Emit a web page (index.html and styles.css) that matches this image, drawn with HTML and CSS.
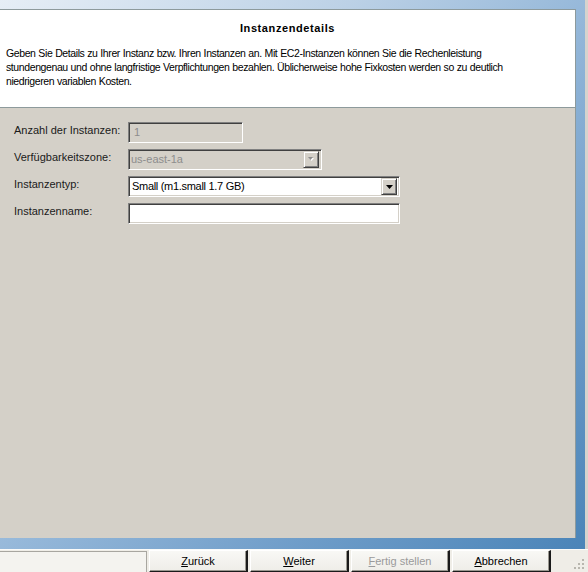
FILE: index.html
```html
<!DOCTYPE html>
<html lang="de">
<head>
<meta charset="utf-8">
<title>Instanzendetails</title>
<link rel="stylesheet" href="styles.css">
</head>
<body>
<div class="window">
  <div class="frame-row">
    <div class="frame">
      <div class="panel">
        <div class="header">
          <h1 class="title">Instanzendetails</h1>
          <p class="desc">Geben Sie Details zu Ihrer Instanz bzw. Ihren Instanzen an. Mit EC2-Instanzen können Sie die Rechenleistung<br>stundengenau und ohne langfristige Verpflichtungen bezahlen. Üblicherweise hohe Fixkosten werden so zu deutlich<br>niedrigeren variablen Kosten.</p>
        </div>
        <div class="body">
          <div class="form">
            <label class="label">Anzahl der Instanzen:</label>
            <div class="field field-disabled field-count">1</div>

            <label class="label">Verfügbarkeitszone:</label>
            <div class="field field-disabled field-zone">
              <span class="field-text">us-east-1a</span>
              <span class="drop drop-disabled">
                <svg width="7" height="5" viewBox="0 0 7 5"><polygon points="1,1 6,1 3.5,4" fill="#fff"/><polygon points="0,0 5,0 2.5,3" fill="#8d8d8d"/></svg>
              </span>
            </div>

            <label class="label">Instanzentyp:</label>
            <div class="field field-type">
              <span class="field-text">Small (m1.small 1.7 GB)</span>
              <span class="drop">
                <svg width="7" height="4" viewBox="0 0 7 4"><polygon points="0,0 7,0 3.5,4" fill="#000"/></svg>
              </span>
            </div>

            <label class="label">Instanzenname:</label>
            <div class="field field-name"></div>
          </div>
        </div>
      </div>
    </div>
    <div class="edge"></div>
  </div>
  <div class="bar">
    <div class="status"></div>
    <button class="btn"><u>Z</u>urück</button>
    <button class="btn"><u>W</u>eiter</button>
    <button class="btn btn-disabled"><u>F</u>ertig stellen</button>
    <button class="btn"><u>A</u>bbrechen</button>
    <div class="grip">
      <svg width="12" height="12" viewBox="0 0 12 12">
        <rect x="9" y="1" width="2" height="2" fill="#b8b6ae"/>
        <rect x="5" y="5" width="2" height="2" fill="#b8b6ae"/>
        <rect x="9" y="5" width="2" height="2" fill="#b8b6ae"/>
        <rect x="1" y="9" width="2" height="2" fill="#b8b6ae"/>
        <rect x="5" y="9" width="2" height="2" fill="#b8b6ae"/>
        <rect x="9" y="9" width="2" height="2" fill="#b8b6ae"/>
      </svg>
    </div>
  </div>
</div>
</body>
</html>
```

FILE: styles.css
```css
html, body {
  margin: 0;
  padding: 0;
}

body {
  width: 588px;
  height: 572px;
  overflow: hidden;
  font-family: "Liberation Sans", Arial, sans-serif;
  font-size: 11px;
  color: #111;
  background: #d4d0c8;
}

.window {
  width: 588px;
  height: 572px;
  display: flex;
  flex-direction: column;
}

.frame-row {
  display: flex;
  height: 549px;
}

.frame {
  width: 585px;
  box-sizing: border-box;
  padding: 9px 9px 11px 0;
  background: linear-gradient(to bottom right, #e6eef6 0%, #bcd1e6 30%, #97b9da 50%, #6f9dc9 75%, #4a84b8 100%);
}

.edge {
  width: 3px;
  background: #d6d3cd;
}

.panel {
  height: 100%;
  display: flex;
  flex-direction: column;
  border-top: 1px solid #8d9a9c;
  border-right: 1px solid #8d9a9c;
  box-sizing: border-box;
}

.header {
  height: 98px;
  box-sizing: border-box;
  background: #fff;
  border-bottom: 1px solid #8d9a9c;
  padding-top: 12px;
}

.title {
  margin: 0;
  font-size: 11px;
  line-height: 13px;
  font-weight: bold;
  letter-spacing: 0.6px;
  text-align: center;
  color: #000;
}

.desc {
  margin: 11px 0 0 0;
  padding-left: 6px;
  font-size: 10.5px;
  letter-spacing: -0.4px;
  word-spacing: 0.3px;
  line-height: 14px;
  white-space: nowrap;
  color: #000;
}

.body {
  flex: 1;
  background: #d4d0c8;
  padding: 14px 0 0 14px;
}

.form {
  display: grid;
  grid-template-columns: 114px auto;
  grid-auto-rows: 21px;
  row-gap: 6px;
  justify-items: start;
}

.label {
  padding-top: 2px;
  line-height: 13px;
  color: #1a1a1a;
}

.field {
  box-sizing: border-box;
  height: 21px;
  display: flex;
  align-items: center;
  padding-left: 3px;
  background: #fff;
  border-style: solid;
  border-width: 1px;
  border-color: #808080 #fff #fff #808080;
  box-shadow: inset 1px 1px 0 #404040, inset -1px -1px 0 #d4d0c8;
  color: #000;
  line-height: 13px;
}

.field-disabled {
  background: #d4d0c8;
  color: #8d8d8d;
}

.field-count {
  width: 115px;
  padding-left: 5px;
}

.field-zone {
  width: 194px;
  padding-left: 2px;
}

.field-type {
  width: 272px;
  letter-spacing: -0.3px;
}

.field-name {
  width: 272px;
}

.field-text {
  flex: 1;
}

.drop {
  width: 16px;
  height: 17px;
  box-sizing: border-box;
  margin-right: 2px;
  display: flex;
  align-items: center;
  justify-content: center;
  background: #d4d0c8;
  border-style: solid;
  border-width: 1px;
  border-color: #d4d0c8 #404040 #404040 #d4d0c8;
  box-shadow: inset 1px 1px 0 #fff, inset -1px -1px 0 #808080;
}

.drop svg {
  display: block;
}

.bar {
  height: 23px;
  display: flex;
  align-items: flex-end;
  background: #efede7;
  border-top: 1px solid #fbfbf9;
  box-sizing: border-box;
}

.status {
  width: 147px;
  height: 21px;
  box-sizing: border-box;
  background: #f4f3ef;
  border-top: 1px solid #a8a6a0;
  border-right: 1px solid #a8a6a0;
}

.btn {
  width: 99px;
  height: 22px;
  margin-left: 2px;
  padding: 0 0 1px 0;
  box-sizing: border-box;
  font-family: "Liberation Sans", Arial, sans-serif;
  font-size: 11px;
  color: #000;
  background: linear-gradient(#f8f8f5, #eeede8);
  border-style: solid;
  border-width: 1px 2px 1px 1px;
  border-color: #fff #1a1a1a #1a1a1a #fff;
  box-shadow: inset -1px -1px 0 #9a9890;
}

.btn-disabled {
  color: #9a9a9a;
}

.grip {
  flex: 1;
  height: 100%;
  display: flex;
  justify-content: flex-end;
  align-items: flex-end;
  padding: 0 3px 2px 0;
}

.grip svg {
  display: block;
}
```
